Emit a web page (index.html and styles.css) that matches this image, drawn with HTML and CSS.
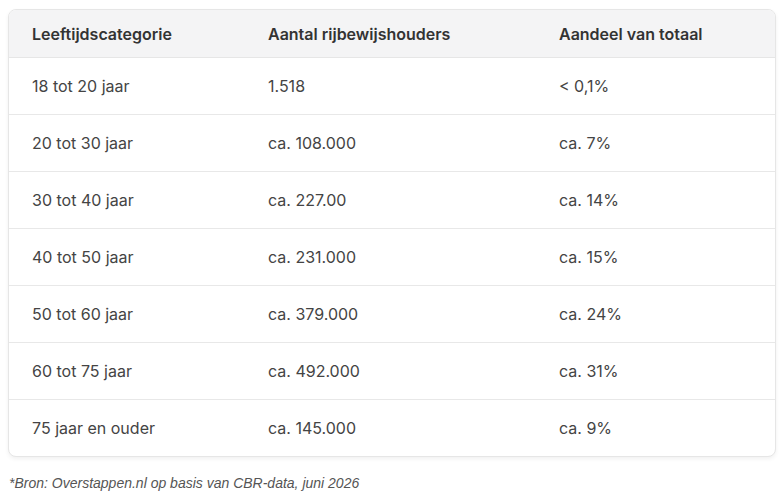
FILE: index.html
```html
<!DOCTYPE html>
<html lang="nl">
<head>
<meta charset="utf-8">
<link rel="stylesheet" href="styles.css">
</head>
<body>
<div class="card">
  <table class="data">
    <thead>
      <tr><th class="c1">Leeftijdscategorie</th><th class="c2">Aantal rijbewijshouders</th><th class="c3">Aandeel van totaal</th></tr>
    </thead>
    <tbody>
      <tr><td>18 tot 20 jaar</td><td>1.518</td><td>&lt; 0,1%</td></tr>
      <tr><td>20 tot 30 jaar</td><td>ca. 108.000</td><td>ca. 7%</td></tr>
      <tr><td>30 tot 40 jaar</td><td>ca. 227.00</td><td>ca. 14%</td></tr>
      <tr><td>40 tot 50 jaar</td><td>ca. 231.000</td><td>ca. 15%</td></tr>
      <tr><td>50 tot 60 jaar</td><td>ca. 379.000</td><td>ca. 24%</td></tr>
      <tr><td>60 tot 75 jaar</td><td>ca. 492.000</td><td>ca. 31%</td></tr>
      <tr><td>75 jaar en ouder</td><td>ca. 145.000</td><td>ca. 9%</td></tr>
    </tbody>
  </table>
</div>
<p class="note">*Bron: Overstappen.nl op basis van CBR-data, juni 2026</p>
</body>
</html>
```
FILE: styles.css
```css
html, body { margin: 0; padding: 0; background: #ffffff; }
body { padding: 9px 5px 0 8px; font-family: Inter, "Noto Sans", sans-serif; }
.card {
  border: 1px solid #e6e6e6;
  border-radius: 8px;
  overflow: hidden;
  box-shadow: 0 2px 4px rgba(0,0,0,0.06);
  background: #fff;
}
.data { width: 100%; border-collapse: collapse; table-layout: fixed; }
.data th, .data td { text-align: left; padding: 0 0 0 23px; }
.data th {
  height: 47px;
  background: #f4f4f5;
  color: #333;
  font-weight: 600;
  font-size: 16px;
  border-bottom: 1px solid #e6e6e6;
}
.data td {
  height: 56px;
  color: #444;
  font-size: 16px;
  font-weight: 400;
  border-bottom: 1px solid #e8e8e8;
}
.data tbody tr:last-child td { border-bottom: none; }
.c1 { width: 213px; }
.c2 { width: 268px; }
.note {
  margin: 18px 0 0 1px;
  font-family: "Liberation Sans", Arial, sans-serif;
  font-style: italic;
  font-size: 14px;
  color: #555;
}
```
